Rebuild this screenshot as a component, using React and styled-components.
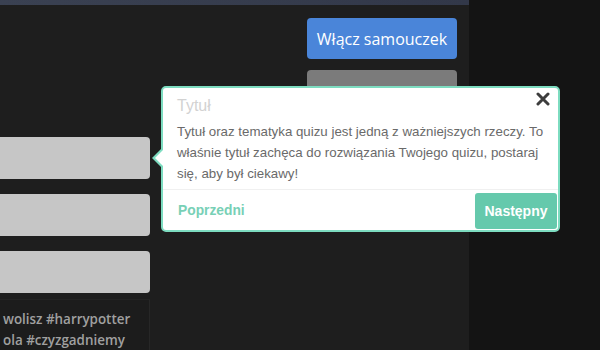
import React from 'react';
import styled, { createGlobalStyle } from 'styled-components';

const GlobalStyle = createGlobalStyle`
  html, body {
    margin: 0;
    padding: 0;
    background: #141414;
    overflow: hidden;
  }
`;

const Page = styled.div`
  display: flex;
  width: 600px;
  height: 350px;
  position: relative;
  overflow: hidden;
`;

const Main = styled.div`
  width: 469px;
  background: #1e1e1e;
  display: flex;
  flex-direction: column;
`;

const Side = styled.div`
  flex: 1;
  background: #141414;
`;

const TopBar = styled.div`
  flex-shrink: 0;
  height: 5px;
  background: linear-gradient(90deg, #3a4152, #323849);
`;

const Content = styled.div`
  flex: 1;
  min-height: 0;
  display: flex;
  justify-content: space-between;
`;

const LeftCol = styled.div`
  width: 150px;
  padding-top: 132px;
  display: flex;
  flex-direction: column;
  gap: 15px;
`;

const Field = styled.div`
  flex-shrink: 0;
  height: 42px;
  background: #c6c6c6;
  border-radius: 0 4px 4px 0;
`;

const TagBox = styled.div`
  flex-shrink: 0;
  margin-top: -9px;
  height: 50px;
  border-right: 1px solid #272727;
  border-top: 1px solid #242424;
  background: #1c1c1c;
  padding: 9px 0 0 3px;
  font-family: 'Open Sans', sans-serif;
  font-weight: 600;
  font-size: 13.4px;
  line-height: 21px;
  color: #a0a0a0;
  white-space: nowrap;
`;

const RightCol = styled.div`
  width: 150px;
  margin-right: 12px;
  padding-top: 13px;
  display: flex;
  flex-direction: column;
  gap: 11px;
`;

const Button = styled.div`
  flex-shrink: 0;
  height: 41px;
  border-radius: 4px;
  background: ${(p) => (p.muted ? '#7b7b7b' : '#4a85d9')};
  color: #fff;
  font-family: 'Open Sans', sans-serif;
  font-size: 16px;
  display: flex;
  align-items: center;
  justify-content: center;
`;

const Popover = styled.div`
  position: absolute;
  left: 161px;
  top: 86px;
  width: 395px;
  height: 142px;
  background: #fff;
  border: 2px solid #7ddcc0;
  border-radius: 5px;
  font-family: 'Liberation Sans', Arial, sans-serif;
  display: flex;
  flex-direction: column;

  &::before,
  &::after {
    content: '';
    position: absolute;
    top: 60px;
    border-style: solid;
    border-color: transparent;
  }
  &::before {
    left: -11px;
    border-width: 10px 10px 10px 0;
    border-right-color: #7ddcc0;
  }
  &::after {
    left: -8px;
    top: 61px;
    border-width: 9px 9px 9px 0;
    border-right-color: #fff;
  }
`;

const Body = styled.div`
  padding: 8px 14px 0 14px;
  flex: 1;
`;

const Title = styled.div`
  font-size: 16px;
  color: #d2d2d2;
  line-height: 20px;
  margin-bottom: 5px;
`;

const Text = styled.div`
  font-size: 13.3px;
  line-height: 21px;
  color: #6a6a6a;
`;

const Close = styled.div`
  position: absolute;
  right: 8px;
  top: 4px;
  width: 14px;
  height: 14px;
`;

const Footer = styled.div`
  height: 40px;
  border-top: 1px solid #f0f0f0;
  display: flex;
  align-items: center;
  justify-content: space-between;
  padding-left: 15px;
`;

const Prev = styled.span`
  font-size: 13.8px;
  font-weight: bold;
  color: #78d0b6;
`;

const Next = styled.div`
  width: 82px;
  height: 36px;
  margin-top: 2px;
  margin-right: 1px;
  border-radius: 3px;
  background: #65c9ac;
  color: #fff;
  font-size: 14px;
  font-weight: bold;
  display: flex;
  align-items: center;
  justify-content: center;
`;

export default function App() {
  return (
    <>
      <GlobalStyle />
      <Page>
        <Main>
          <TopBar />
          <Content>
            <LeftCol>
              <Field />
              <Field />
              <Field />
              <TagBox>
                wolisz #harrypotter
                <br />
                ola #czyzgadniemy
              </TagBox>
            </LeftCol>
            <RightCol>
              <Button>Włącz samouczek</Button>
              <Button muted />
            </RightCol>
          </Content>
        </Main>
        <Side />
        <Popover>
          <Close>
            <svg width="14" height="14" viewBox="0 0 14 14">
              <path d="M2 2L12 12M12 2L2 12" stroke="#3d3d3d" strokeWidth="3" strokeLinecap="round" />
            </svg>
          </Close>
          <Body>
            <Title>Tytuł</Title>
            <Text>
              Tytuł oraz tematyka quizu jest jedną z ważniejszych rzeczy. To właśnie tytuł zachęca do
              rozwiązania Twojego quizu, postaraj się, aby był ciekawy!
            </Text>
          </Body>
          <Footer>
            <Prev>Poprzedni</Prev>
            <Next>Następny</Next>
          </Footer>
        </Popover>
      </Page>
    </>
  );
}
